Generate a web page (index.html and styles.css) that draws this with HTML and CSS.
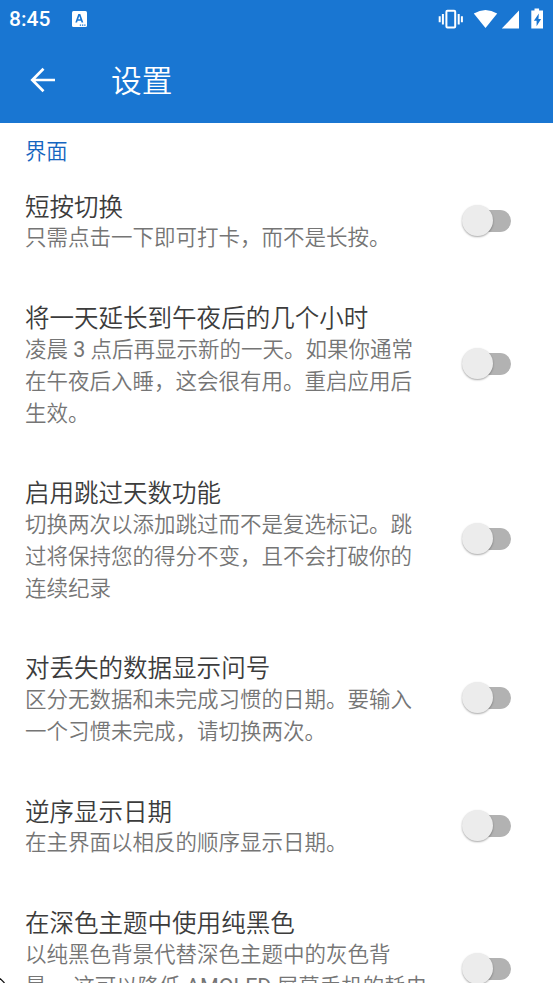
FILE: index.html
```html
<!DOCTYPE html>
<html lang="zh-CN">
<head>
<meta charset="utf-8">
<title>设置</title>
<link rel="stylesheet" href="styles.css">
</head>
<body>
<div class="screen">
  <header class="top">
    <div class="status">
      <span class="clock">8:45</span>
      <svg class="ime" width="15" height="16" viewBox="0 0 15 16"><rect width="15" height="16" rx="1.500" fill="#fff"/><path d="M3.300 11.500 6.300 3h2l3 8.500H9.500L9 9.800H5.600l-.5 1.700zM6.200 8.200h2.200L7.300 4.900z" fill="#1976d2" fill-rule="evenodd"/><path d="M7.800 13.400h1.300v1.300H7.800zM10 13.400h1.300v1.300H10zM12.200 13.400h1.300v1.300h-1.300z" fill="#1976d2"/></svg>
      <svg class="sys" width="110" height="24" viewBox="0 0 110 24">
        <rect x="8.400" y="3.800" width="8.800" height="16.600" rx="1" fill="none" stroke="#fff" stroke-width="2"/>
        <path d="M4.900 7v10.400M20.700 7v10.400M1.700 9.200v6M23.900 9.200v6" stroke="#fff" stroke-width="2"/>
        <path d="M35.800 6.500Q47.500-.600 59.200 6.500L47.500 21z" fill="#fff"/>
        <path d="M81 3.500v18H63.800z" fill="#fff"/>
        <path d="M96.500 1.500h4.600v2h3.900v18H93.300v-18h3.200z" fill="#fff"/><path d="M100.800 6.500 95.900 13.700h2.700v5.500l4.500-7.200h-2.600z" fill="#1976d2"/>
      </svg>
    </div>
    <div class="bar">
      <svg class="back" width="26" height="26" viewBox="0 0 26 26"><path d="M25 13H2.500M13.500 1.800 2.300 13l11.200 11.200" fill="none" stroke="#fff" stroke-width="2.700"/></svg>
      <h1>设置</h1>
    </div>
  </header>
  <main>
    <h2>界面</h2>
    <section class="row"><div class="text"><h3>短按切换</h3><p>只需点击一下即可打卡，而不是长按。</p></div><span class="switch"></span></section>
    <section class="row"><div class="text"><h3>将一天延长到午夜后的几个小时</h3><p>凌晨 <span class="latin">3</span> 点后再显示新的一天。如果你通常<br>在午夜后入睡，这会很有用。重启应用后<br>生效。</p></div><span class="switch"></span></section>
    <section class="row"><div class="text"><h3>启用跳过天数功能</h3><p>切换两次以添加跳过而不是复选标记。跳<br>过将保持您的得分不变，且不会打破你的<br>连续纪录</p></div><span class="switch"></span></section>
    <section class="row"><div class="text"><h3>对丢失的数据显示问号</h3><p>区分无数据和未完成习惯的日期。要输入<br>一个习惯未完成，请切换两次。</p></div><span class="switch"></span></section>
    <section class="row"><div class="text"><h3>逆序显示日期</h3><p>在主界面以相反的顺序显示日期。</p></div><span class="switch"></span></section>
    <section class="row"><div class="text"><h3>在深色主题中使用纯黑色</h3><p>以纯黑色背景代替深色主题中的灰色背<br>景。 这可以降低 <span class="latin">AMOLED</span> 屏幕手机的耗电<br>量。</p></div><span class="switch"></span></section>
  </main>
  <svg class="pointer" width="5" height="5" viewBox="0 0 5 5"><path d="M0 .500 4.500 5" stroke="#111" stroke-width="1.200"/></svg>
</div>
</body>
</html>
```
FILE: styles.css
```css
* { box-sizing: border-box; margin: 0; padding: 0; }
body { background: #fff; font-family: Roboto, "Noto Sans CJK SC", sans-serif; }
h1, h2, h3, p { font-weight: 350; }
.latin { font-weight: 400; }
.screen { position: relative; width: 553px; height: 983px; overflow: hidden; background: #fff; }
.top { height: 123px; background: #1976d2; color: #fff; }
.status { display: flex; align-items: center; height: 37px; padding-left: 9px; }
.clock { width: 63px; font-size: 21px; font-weight: 500; line-height: 24px; padding-top: 1px; }
.sys { margin-left: auto; margin-right: 5px; }
.bar { display: flex; align-items: center; height: 86px; padding-left: 30px; }
.back { flex: none; }
.bar h1 { margin-left: 55px; padding-top: 3px; font-size: 30.700px; line-height: 40px; }
main h2 { height: 42px; padding: 13px 25px 0; font-size: 21.300px; line-height: 31px; color: #1565c0; }
.row { display: flex; justify-content: space-between; align-items: center; padding: 24.200px 42px 24.200px 25px; }
.text { white-space: nowrap; }
.text h3 { padding-top: 3.500px; margin-bottom: -1.500px; font-size: 24.530px; line-height: 29.400px; color: #3c3c3c; }
.text p { padding-top: 1.900px; margin-bottom: -1.900px; font-size: 21.500px; line-height: 31.750px; color: #757575; }
.switch { position: relative; width: 50px; height: 22px; flex: none; display: flex; justify-content: flex-end; }
.switch::before { content: ""; width: 36px; height: 22px; border-radius: 11px; background: #b2b2b2; }
.switch::after { content: ""; position: absolute; left: 1px; top: -5px; width: 31px; height: 31px; border-radius: 50%; background: #ececec; box-shadow: 0 1px 2px rgba(0, 0, 0, .35); }
.pointer { position: absolute; left: 0; bottom: 0; }
```
